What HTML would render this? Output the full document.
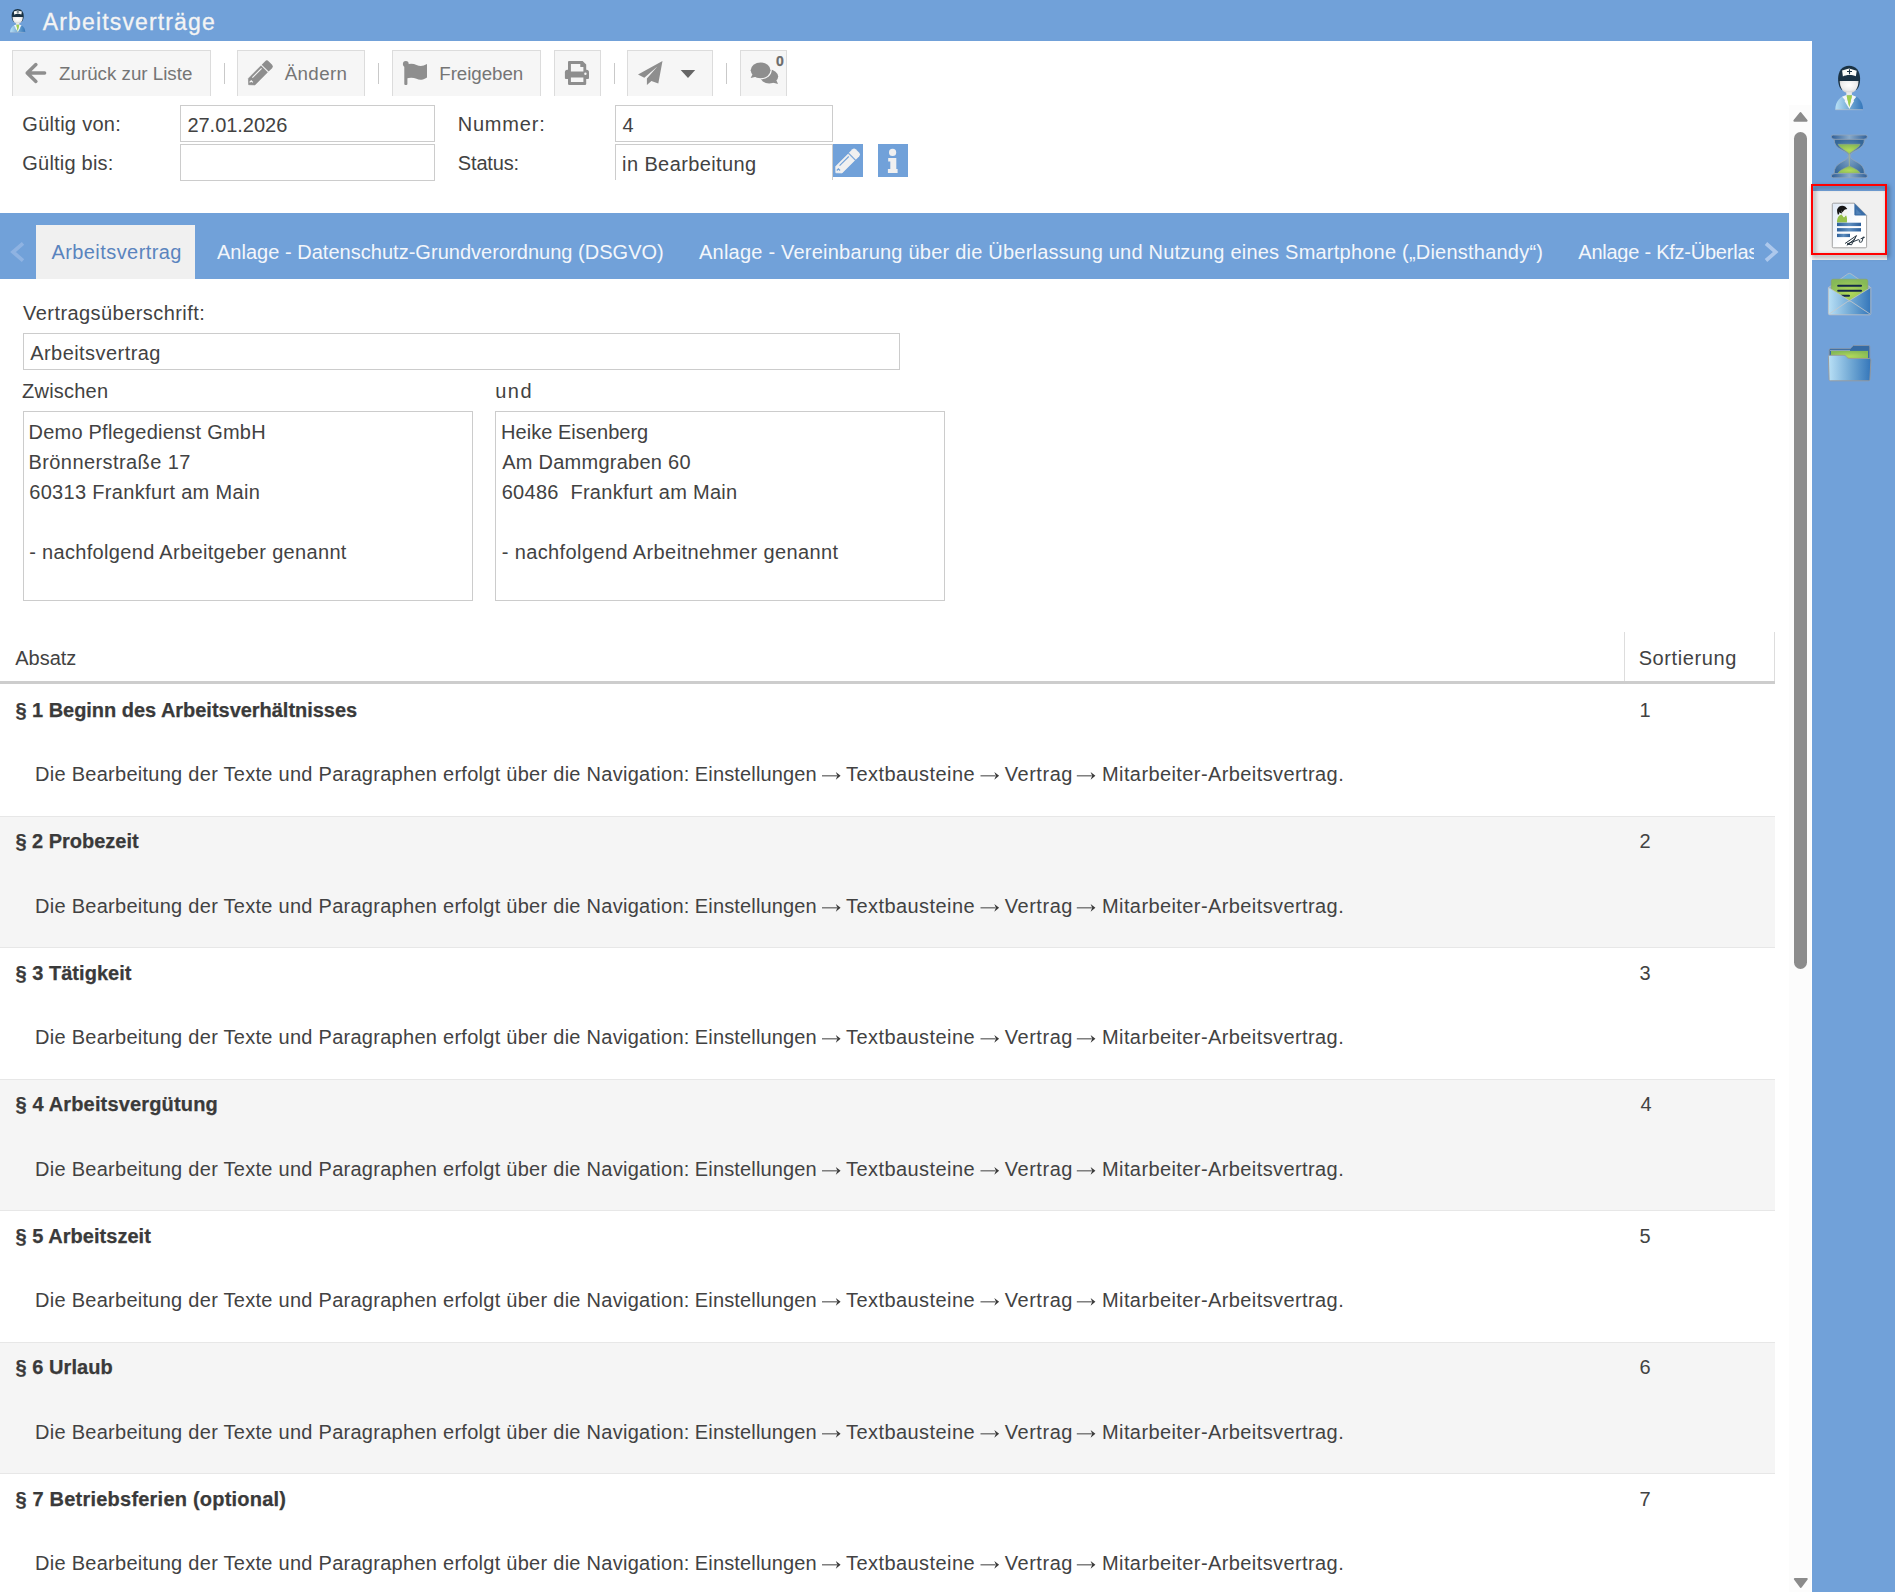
<!DOCTYPE html>
<html lang="de">
<head>
<meta charset="utf-8">
<title>Arbeitsverträge</title>
<style>
*{box-sizing:border-box;margin:0;padding:0}
html,body{width:1895px;height:1592px;overflow:hidden;background:#fff}
body{position:relative;font-family:"Liberation Sans",sans-serif;font-size:20px;color:#424242}
.a{position:absolute}
.t{position:absolute;white-space:pre;line-height:1}
svg{position:absolute;overflow:visible}
.btn{position:absolute;top:50px;height:46px;background:#f6f6f6;border:1px solid #dcdcdc;border-bottom:none}
.sep{position:absolute;top:63px;width:1px;height:21px;background:#c9c9c9}
.inp{position:absolute;border:1px solid #ccc;background:#fff}
.row{position:absolute;left:0;width:1775px}
</style>
</head>
<body>
<div class="a" style="left:0px;top:0px;width:1895px;height:41px;background:#71a1d9"></div>
<div class="a" style="left:1812px;top:0px;width:83px;height:1592px;background:#71a1d9"></div>
<div class="btn" style="left:12px;width:199px"></div>
<div class="btn" style="left:237px;width:128px"></div>
<div class="btn" style="left:392px;width:149px"></div>
<div class="btn" style="left:554px;width:47px"></div>
<div class="btn" style="left:627px;width:86px"></div>
<div class="btn" style="left:740px;width:47px"></div>
<div class="sep" style="left:224px"></div>
<div class="sep" style="left:378px"></div>
<div class="sep" style="left:614px"></div>
<div class="sep" style="left:726px"></div>
<div class="inp" style="left:180px;top:105px;width:255px;height:37px"></div>
<div class="inp" style="left:180px;top:144px;width:255px;height:37px"></div>
<div class="inp" style="left:615px;top:105px;width:218px;height:37px"></div>
<div class="inp" style="left:615px;top:144px;width:218px;height:36px;border-bottom:none"></div>
<div class="a" style="left:833px;top:144px;width:30px;height:33px;background:#71a1d9"></div>
<div class="a" style="left:878px;top:144px;width:30px;height:33px;background:#71a1d9"></div>
<div class="a" style="left:0px;top:213px;width:1789px;height:66px;background:#71a1d9"></div>
<div class="a" style="left:36px;top:225px;width:159px;height:54px;background:#f0f0f0"></div>
<div class="inp" style="left:23px;top:333px;width:877px;height:37px"></div>
<div class="inp" style="left:23px;top:411px;width:450px;height:190px"></div>
<div class="inp" style="left:495px;top:411px;width:450px;height:190px"></div>
<div class="a" style="left:1624px;top:632px;width:1px;height:50px;background:#ddd"></div>
<div class="a" style="left:1774px;top:632px;width:1px;height:50px;background:#ddd"></div>
<div class="row" style="top:817px;height:130px;background:#f5f5f5"></div>
<div class="row" style="top:816px;height:1px;background:#e7e7e7"></div>
<div class="row" style="top:947px;height:1px;background:#e7e7e7"></div>
<div class="row" style="top:1080px;height:130px;background:#f5f5f5"></div>
<div class="row" style="top:1079px;height:1px;background:#e7e7e7"></div>
<div class="row" style="top:1210px;height:1px;background:#e7e7e7"></div>
<div class="row" style="top:1343px;height:130px;background:#f5f5f5"></div>
<div class="row" style="top:1342px;height:1px;background:#e7e7e7"></div>
<div class="row" style="top:1473px;height:1px;background:#e7e7e7"></div>
<div class="a" style="left:0px;top:681px;width:1775px;height:3px;background:#cdcdcd"></div>
<div class="a" style="left:1789px;top:105px;width:22px;height:1487px;background:#fcfcfc"></div>
<div class="a" style="left:1794px;top:132px;width:13px;height:837px;background:#8c8c8c;border-radius:6.5px"></div>
<div class="a" style="left:1812px;top:191px;width:75px;height:69px;background:#f0f0f0"></div>
<div class="t" style="left:42.80px;top:11px;font-size:23px;color:#f4f4f4;letter-spacing:1.143px;-webkit-text-stroke:0.3px #f4f4f4">Arbeitsverträge</div>
<div class="t" style="left:59.00px;top:65px;font-size:18.75px;color:#757575;letter-spacing:0.000px">Zurück zur Liste</div>
<div class="t" style="left:284.70px;top:65px;font-size:18.75px;color:#757575;letter-spacing:0.360px">Ändern</div>
<div class="t" style="left:439.30px;top:65px;font-size:18.75px;color:#757575;letter-spacing:-0.063px">Freigeben</div>
<div class="t" style="left:776.10px;top:54px;font-size:14px;color:#6c6c6c;letter-spacing:0.000px;font-weight:bold;-webkit-text-stroke:0.25px #6c6c6c">0</div>
<div class="t" style="left:22.30px;top:114px;font-size:20px;color:#424242;letter-spacing:0.290px">Gültig von:</div>
<div class="t" style="left:22.30px;top:153px;font-size:20px;color:#424242;letter-spacing:0.210px">Gültig bis:</div>
<div class="t" style="left:457.70px;top:114px;font-size:20px;color:#424242;letter-spacing:0.800px">Nummer:</div>
<div class="t" style="left:457.80px;top:153px;font-size:20px;color:#424242;letter-spacing:-0.150px">Status:</div>
<div class="t" style="left:187.40px;top:115px;font-size:20px;color:#424242;letter-spacing:-0.022px">27.01.2026</div>
<div class="t" style="left:622.40px;top:115px;font-size:20px;color:#424242;letter-spacing:0.000px">4</div>
<div class="t" style="left:622.10px;top:154px;font-size:20px;color:#424242;letter-spacing:0.392px">in Bearbeitung</div>
<div class="t" style="left:51.40px;top:242px;font-size:20px;color:#5a84be;letter-spacing:0.431px">Arbeitsvertrag</div>
<div class="t" style="left:217.00px;top:242px;font-size:20px;color:#f3f6fb;letter-spacing:0.023px">Anlage - Datenschutz-Grundverordnung (DSGVO)</div>
<div class="t" style="left:699.00px;top:242px;font-size:20px;color:#f3f6fb;letter-spacing:0.221px">Anlage - Vereinbarung über die Überlassung und Nutzung eines Smartphone („Diensthandy“)</div>
<div class="t" style="left:1578.30px;top:242px;font-size:20px;color:#f3f6fb;letter-spacing:-0.240px;width:175.9px;overflow:hidden">Anlage - Kfz-Überlassung</div>
<div class="t" style="left:23.10px;top:303px;font-size:20px;color:#424242;letter-spacing:0.432px">Vertragsüberschrift:</div>
<div class="t" style="left:30.20px;top:343px;font-size:20px;color:#424242;letter-spacing:0.446px">Arbeitsvertrag</div>
<div class="t" style="left:22.10px;top:381px;font-size:20px;color:#424242;letter-spacing:0.214px">Zwischen</div>
<div class="t" style="left:495.20px;top:381px;font-size:20px;color:#424242;letter-spacing:1.500px">und</div>
<div class="t" style="left:28.50px;top:422px;font-size:20px;color:#424242;letter-spacing:0.229px">Demo Pflegedienst GmbH</div>
<div class="t" style="left:28.50px;top:452px;font-size:20px;color:#424242;letter-spacing:0.413px">Brönnerstraße 17</div>
<div class="t" style="left:29.20px;top:482px;font-size:20px;color:#424242;letter-spacing:0.327px">60313 Frankfurt am Main</div>
<div class="t" style="left:29.20px;top:542px;font-size:20px;color:#424242;letter-spacing:0.322px">- nachfolgend Arbeitgeber genannt</div>
<div class="t" style="left:501.10px;top:422px;font-size:20px;color:#424242;letter-spacing:0.029px">Heike Eisenberg</div>
<div class="t" style="left:502.20px;top:452px;font-size:20px;color:#424242;letter-spacing:0.253px">Am Dammgraben 60</div>
<div class="t" style="left:501.70px;top:482px;font-size:20px;color:#424242;letter-spacing:0.283px">60486 &nbsp;Frankfurt am Main</div>
<div class="t" style="left:501.70px;top:542px;font-size:20px;color:#424242;letter-spacing:0.391px">- nachfolgend Arbeitnehmer genannt</div>
<div class="t" style="left:15.20px;top:648px;font-size:20px;color:#424242;letter-spacing:0.000px">Absatz</div>
<div class="t" style="left:1638.70px;top:648px;font-size:20px;color:#424242;letter-spacing:0.589px">Sortierung</div>
<div class="t" style="left:15.40px;top:700px;font-size:20px;color:#3a3a3a;letter-spacing:-0.029px;font-weight:bold;-webkit-text-stroke:0.25px #3a3a3a">§ 1 Beginn des Arbeitsverhältnisses</div>
<div class="t" style="left:1639.50px;top:700px;font-size:20px;color:#424242;letter-spacing:0.000px">1</div>
<div class="t" style="left:35.00px;top:764px;font-size:20px;color:#424242;letter-spacing:0.272px">Die Bearbeitung der Texte und Paragraphen erfolgt über die Navigation:</div>
<div class="t" style="left:694.80px;top:764px;font-size:20px;color:#424242;letter-spacing:0.150px">Einstellungen</div>
<div class="t" style="left:846.00px;top:764px;font-size:20px;color:#424242;letter-spacing:0.433px">Textbausteine</div>
<div class="t" style="left:1004.70px;top:764px;font-size:20px;color:#424242;letter-spacing:0.550px">Vertrag</div>
<div class="t" style="left:1102.00px;top:764px;font-size:20px;color:#424242;letter-spacing:0.404px">Mitarbeiter-Arbeitsvertrag.</div>
<div class="t" style="left:15.40px;top:831px;font-size:20px;color:#3a3a3a;letter-spacing:-0.008px;font-weight:bold;-webkit-text-stroke:0.25px #3a3a3a">§ 2 Probezeit</div>
<div class="t" style="left:1639.50px;top:831px;font-size:20px;color:#424242;letter-spacing:0.000px">2</div>
<div class="t" style="left:35.00px;top:896px;font-size:20px;color:#424242;letter-spacing:0.272px">Die Bearbeitung der Texte und Paragraphen erfolgt über die Navigation:</div>
<div class="t" style="left:694.80px;top:896px;font-size:20px;color:#424242;letter-spacing:0.150px">Einstellungen</div>
<div class="t" style="left:846.00px;top:896px;font-size:20px;color:#424242;letter-spacing:0.433px">Textbausteine</div>
<div class="t" style="left:1004.70px;top:896px;font-size:20px;color:#424242;letter-spacing:0.550px">Vertrag</div>
<div class="t" style="left:1102.00px;top:896px;font-size:20px;color:#424242;letter-spacing:0.404px">Mitarbeiter-Arbeitsvertrag.</div>
<div class="t" style="left:15.40px;top:963px;font-size:20px;color:#3a3a3a;letter-spacing:0.042px;font-weight:bold;-webkit-text-stroke:0.25px #3a3a3a">§ 3 Tätigkeit</div>
<div class="t" style="left:1639.50px;top:963px;font-size:20px;color:#424242;letter-spacing:0.000px">3</div>
<div class="t" style="left:35.00px;top:1027px;font-size:20px;color:#424242;letter-spacing:0.272px">Die Bearbeitung der Texte und Paragraphen erfolgt über die Navigation:</div>
<div class="t" style="left:694.80px;top:1027px;font-size:20px;color:#424242;letter-spacing:0.150px">Einstellungen</div>
<div class="t" style="left:846.00px;top:1027px;font-size:20px;color:#424242;letter-spacing:0.433px">Textbausteine</div>
<div class="t" style="left:1004.70px;top:1027px;font-size:20px;color:#424242;letter-spacing:0.550px">Vertrag</div>
<div class="t" style="left:1102.00px;top:1027px;font-size:20px;color:#424242;letter-spacing:0.404px">Mitarbeiter-Arbeitsvertrag.</div>
<div class="t" style="left:15.40px;top:1094px;font-size:20px;color:#3a3a3a;letter-spacing:0.163px;font-weight:bold;-webkit-text-stroke:0.25px #3a3a3a">§ 4 Arbeitsvergütung</div>
<div class="t" style="left:1640.50px;top:1094px;font-size:20px;color:#424242;letter-spacing:0.000px">4</div>
<div class="t" style="left:35.00px;top:1159px;font-size:20px;color:#424242;letter-spacing:0.272px">Die Bearbeitung der Texte und Paragraphen erfolgt über die Navigation:</div>
<div class="t" style="left:694.80px;top:1159px;font-size:20px;color:#424242;letter-spacing:0.150px">Einstellungen</div>
<div class="t" style="left:846.00px;top:1159px;font-size:20px;color:#424242;letter-spacing:0.433px">Textbausteine</div>
<div class="t" style="left:1004.70px;top:1159px;font-size:20px;color:#424242;letter-spacing:0.550px">Vertrag</div>
<div class="t" style="left:1102.00px;top:1159px;font-size:20px;color:#424242;letter-spacing:0.404px">Mitarbeiter-Arbeitsvertrag.</div>
<div class="t" style="left:15.40px;top:1226px;font-size:20px;color:#3a3a3a;letter-spacing:0.043px;font-weight:bold;-webkit-text-stroke:0.25px #3a3a3a">§ 5 Arbeitszeit</div>
<div class="t" style="left:1639.50px;top:1226px;font-size:20px;color:#424242;letter-spacing:0.000px">5</div>
<div class="t" style="left:35.00px;top:1290px;font-size:20px;color:#424242;letter-spacing:0.272px">Die Bearbeitung der Texte und Paragraphen erfolgt über die Navigation:</div>
<div class="t" style="left:694.80px;top:1290px;font-size:20px;color:#424242;letter-spacing:0.150px">Einstellungen</div>
<div class="t" style="left:846.00px;top:1290px;font-size:20px;color:#424242;letter-spacing:0.433px">Textbausteine</div>
<div class="t" style="left:1004.70px;top:1290px;font-size:20px;color:#424242;letter-spacing:0.550px">Vertrag</div>
<div class="t" style="left:1102.00px;top:1290px;font-size:20px;color:#424242;letter-spacing:0.404px">Mitarbeiter-Arbeitsvertrag.</div>
<div class="t" style="left:15.40px;top:1357px;font-size:20px;color:#3a3a3a;letter-spacing:0.067px;font-weight:bold;-webkit-text-stroke:0.25px #3a3a3a">§ 6 Urlaub</div>
<div class="t" style="left:1639.50px;top:1357px;font-size:20px;color:#424242;letter-spacing:0.000px">6</div>
<div class="t" style="left:35.00px;top:1422px;font-size:20px;color:#424242;letter-spacing:0.272px">Die Bearbeitung der Texte und Paragraphen erfolgt über die Navigation:</div>
<div class="t" style="left:694.80px;top:1422px;font-size:20px;color:#424242;letter-spacing:0.150px">Einstellungen</div>
<div class="t" style="left:846.00px;top:1422px;font-size:20px;color:#424242;letter-spacing:0.433px">Textbausteine</div>
<div class="t" style="left:1004.70px;top:1422px;font-size:20px;color:#424242;letter-spacing:0.550px">Vertrag</div>
<div class="t" style="left:1102.00px;top:1422px;font-size:20px;color:#424242;letter-spacing:0.404px">Mitarbeiter-Arbeitsvertrag.</div>
<div class="t" style="left:15.40px;top:1489px;font-size:20px;color:#3a3a3a;letter-spacing:0.218px;font-weight:bold;-webkit-text-stroke:0.25px #3a3a3a">§ 7 Betriebsferien (optional)</div>
<div class="t" style="left:1639.50px;top:1489px;font-size:20px;color:#424242;letter-spacing:0.000px">7</div>
<div class="t" style="left:35.00px;top:1553px;font-size:20px;color:#424242;letter-spacing:0.272px">Die Bearbeitung der Texte und Paragraphen erfolgt über die Navigation:</div>
<div class="t" style="left:694.80px;top:1553px;font-size:20px;color:#424242;letter-spacing:0.150px">Einstellungen</div>
<div class="t" style="left:846.00px;top:1553px;font-size:20px;color:#424242;letter-spacing:0.433px">Textbausteine</div>
<div class="t" style="left:1004.70px;top:1553px;font-size:20px;color:#424242;letter-spacing:0.550px">Vertrag</div>
<div class="t" style="left:1102.00px;top:1553px;font-size:20px;color:#424242;letter-spacing:0.404px">Mitarbeiter-Arbeitsvertrag.</div>
<svg width="1895" height="1592" viewBox="0 0 1895 1592" style="left:0;top:0"><path d="M44.6,73 H27.2 M35.9,64.6 L27.2,73 L35.9,81.4" fill="none" stroke="#8e8e8e" stroke-width="3.5" stroke-linecap="round" stroke-linejoin="round"/>
<g transform="translate(248.4,84.9) rotate(-45)">
<path d="M0.3,0 L4.6,-4.6 L22.4,-4.6 L22.4,4.6 L4.6,4.6 Z" fill="#8e8e8e" stroke="#8e8e8e" stroke-width="0.6" stroke-linejoin="round"/>
<path d="M23.7,-4.9 H28.6 Q31,-4.9 31,-2.5 V2.5 Q31,4.9 28.6,4.9 H23.7 Z" fill="#8e8e8e"/>
<rect x="8" y="-2.9" width="13" height="1.1" fill="#f6f6f6"/>
<path d="M2.6,-0.9 L4.9,-0.9 L4.9,1.4" fill="none" stroke="#f6f6f6" stroke-width="1.2"/>
</g>
<circle cx="405.8" cy="63.9" r="2.9" fill="#8e8e8e"/><rect x="404.3" y="64" width="3.1" height="21" rx="1" fill="#8e8e8e"/>
<path d="M406,64.8 C410,63.3 413.5,63.6 416.5,65 C420,66.7 423,66.4 427,64.1 L427,77.4 C423,79.9 420,80.3 416.5,78.8 C413.5,77.5 410.5,77.3 406,78.4 Z" fill="#8e8e8e"/>
<path d="M569,61 H582.6 L586.2,64.6 V72 H568 V62 Q568,61 569,61 Z" fill="#8e8e8e"/>
<path d="M567.4,69.8 H586.5 Q589,69.8 589,72.3 V78 Q589,79 588,79 H565.9 Q564.9,79 564.9,78 V72.3 Q564.9,69.8 567.4,69.8 Z" fill="#8e8e8e"/>
<rect x="568" y="74.8" width="18.2" height="10.2" rx="1.2" fill="#8e8e8e"/>
<path d="M570.9,63.9 H580.3 V67 H583.4 V71.6 H570.9 Z" fill="#f6f6f6"/>
<rect x="570.9" y="77.5" width="12.5" height="4.5" fill="#f6f6f6"/>
<circle cx="585.4" cy="73.7" r="1.2" fill="#f6f6f6"/>
<path d="M662.5,60.9 L638,74.6 L644.3,77.8 L657.4,66.4 L646.9,78.4 L646.9,85.1 L651.4,80.9 L658.3,83.6 Z" fill="#8e8e8e"/>
<path d="M680.7,70 H695.2 L688,78 Z" fill="#666"/>
<path d="M776.5,80.5 L778,83.9 L772.5,82.6 Z" fill="#8e8e8e"/>
<ellipse cx="769.2" cy="76.6" rx="9" ry="7" fill="#8e8e8e"/>
<ellipse cx="760.6" cy="70.3" rx="11.1" ry="9" fill="#f6f6f6"/>
<path d="M752.8,74 L750.6,78 L757,76.6 Z" fill="#8e8e8e"/>
<ellipse cx="760.6" cy="70.3" rx="9.9" ry="7.9" fill="#8e8e8e"/>
<g transform="translate(835.6,173) rotate(-45)">
<path d="M0.3,0 L4.6,-4.6 L22.4,-4.6 L22.4,4.6 L4.6,4.6 Z" fill="#f0f0f0" stroke="#f0f0f0" stroke-width="0.6" stroke-linejoin="round"/>
<path d="M23.7,-4.9 H28.6 Q31,-4.9 31,-2.5 V2.5 Q31,4.9 28.6,4.9 H23.7 Z" fill="#f0f0f0"/>
<rect x="8" y="-2.9" width="13" height="1.1" fill="#71a1d9"/>
<path d="M2.6,-0.9 L4.9,-0.9 L4.9,1.4" fill="none" stroke="#71a1d9" stroke-width="1.2"/>
</g>
<circle cx="892.6" cy="152.4" r="3.6" fill="#f0f0f0"/><path d="M888.2,158 H896.3 V168.9 H897.6 V173 H887.9 V168.9 H890.3 V161.6 H888.2 Z" fill="#f0f0f0"/>
<path d="M23,243.3 L13,252 L23,260.7" fill="none" stroke="#8fb3e2" stroke-width="3.7"/>
<path d="M1766,243.5 L1775.7,252 L1766,260.5" fill="none" stroke="#adc8ec" stroke-width="3.7"/>
<path d="M1800.5,113 L1806.6,120.7 H1794.4 Z" fill="#8b8b8b" stroke="#8b8b8b" stroke-width="2" stroke-linejoin="round"/>
<path d="M1794.8,1579 H1806.8 L1800.8,1587 Z" fill="#8b8b8b" stroke="#8b8b8b" stroke-width="2" stroke-linejoin="round"/>
<path d="M822,775.8 h15" stroke="#6a6a6a" stroke-width="1.3" fill="none"/><path d="M840.6,775.8 l-4.8,-3.9 l1.6,3.9 l-1.6,3.9 Z" fill="#3a3a3a"/>
<path d="M980.5,775.8 h15" stroke="#6a6a6a" stroke-width="1.3" fill="none"/><path d="M999.1,775.8 l-4.8,-3.9 l1.6,3.9 l-1.6,3.9 Z" fill="#3a3a3a"/>
<path d="M1076.8,775.8 h15" stroke="#6a6a6a" stroke-width="1.3" fill="none"/><path d="M1095.3999999999999,775.8 l-4.8,-3.9 l1.6,3.9 l-1.6,3.9 Z" fill="#3a3a3a"/>
<path d="M822,907.8 h15" stroke="#6a6a6a" stroke-width="1.3" fill="none"/><path d="M840.6,907.8 l-4.8,-3.9 l1.6,3.9 l-1.6,3.9 Z" fill="#3a3a3a"/>
<path d="M980.5,907.8 h15" stroke="#6a6a6a" stroke-width="1.3" fill="none"/><path d="M999.1,907.8 l-4.8,-3.9 l1.6,3.9 l-1.6,3.9 Z" fill="#3a3a3a"/>
<path d="M1076.8,907.8 h15" stroke="#6a6a6a" stroke-width="1.3" fill="none"/><path d="M1095.3999999999999,907.8 l-4.8,-3.9 l1.6,3.9 l-1.6,3.9 Z" fill="#3a3a3a"/>
<path d="M822,1038.8 h15" stroke="#6a6a6a" stroke-width="1.3" fill="none"/><path d="M840.6,1038.8 l-4.8,-3.9 l1.6,3.9 l-1.6,3.9 Z" fill="#3a3a3a"/>
<path d="M980.5,1038.8 h15" stroke="#6a6a6a" stroke-width="1.3" fill="none"/><path d="M999.1,1038.8 l-4.8,-3.9 l1.6,3.9 l-1.6,3.9 Z" fill="#3a3a3a"/>
<path d="M1076.8,1038.8 h15" stroke="#6a6a6a" stroke-width="1.3" fill="none"/><path d="M1095.3999999999999,1038.8 l-4.8,-3.9 l1.6,3.9 l-1.6,3.9 Z" fill="#3a3a3a"/>
<path d="M822,1170.8 h15" stroke="#6a6a6a" stroke-width="1.3" fill="none"/><path d="M840.6,1170.8 l-4.8,-3.9 l1.6,3.9 l-1.6,3.9 Z" fill="#3a3a3a"/>
<path d="M980.5,1170.8 h15" stroke="#6a6a6a" stroke-width="1.3" fill="none"/><path d="M999.1,1170.8 l-4.8,-3.9 l1.6,3.9 l-1.6,3.9 Z" fill="#3a3a3a"/>
<path d="M1076.8,1170.8 h15" stroke="#6a6a6a" stroke-width="1.3" fill="none"/><path d="M1095.3999999999999,1170.8 l-4.8,-3.9 l1.6,3.9 l-1.6,3.9 Z" fill="#3a3a3a"/>
<path d="M822,1301.8 h15" stroke="#6a6a6a" stroke-width="1.3" fill="none"/><path d="M840.6,1301.8 l-4.8,-3.9 l1.6,3.9 l-1.6,3.9 Z" fill="#3a3a3a"/>
<path d="M980.5,1301.8 h15" stroke="#6a6a6a" stroke-width="1.3" fill="none"/><path d="M999.1,1301.8 l-4.8,-3.9 l1.6,3.9 l-1.6,3.9 Z" fill="#3a3a3a"/>
<path d="M1076.8,1301.8 h15" stroke="#6a6a6a" stroke-width="1.3" fill="none"/><path d="M1095.3999999999999,1301.8 l-4.8,-3.9 l1.6,3.9 l-1.6,3.9 Z" fill="#3a3a3a"/>
<path d="M822,1433.8 h15" stroke="#6a6a6a" stroke-width="1.3" fill="none"/><path d="M840.6,1433.8 l-4.8,-3.9 l1.6,3.9 l-1.6,3.9 Z" fill="#3a3a3a"/>
<path d="M980.5,1433.8 h15" stroke="#6a6a6a" stroke-width="1.3" fill="none"/><path d="M999.1,1433.8 l-4.8,-3.9 l1.6,3.9 l-1.6,3.9 Z" fill="#3a3a3a"/>
<path d="M1076.8,1433.8 h15" stroke="#6a6a6a" stroke-width="1.3" fill="none"/><path d="M1095.3999999999999,1433.8 l-4.8,-3.9 l1.6,3.9 l-1.6,3.9 Z" fill="#3a3a3a"/>
<path d="M822,1564.8 h15" stroke="#6a6a6a" stroke-width="1.3" fill="none"/><path d="M840.6,1564.8 l-4.8,-3.9 l1.6,3.9 l-1.6,3.9 Z" fill="#3a3a3a"/>
<path d="M980.5,1564.8 h15" stroke="#6a6a6a" stroke-width="1.3" fill="none"/><path d="M999.1,1564.8 l-4.8,-3.9 l1.6,3.9 l-1.6,3.9 Z" fill="#3a3a3a"/>
<path d="M1076.8,1564.8 h15" stroke="#6a6a6a" stroke-width="1.3" fill="none"/><path d="M1095.3999999999999,1564.8 l-4.8,-3.9 l1.6,3.9 l-1.6,3.9 Z" fill="#3a3a3a"/></svg>
<svg width="1895" height="1592" viewBox="0 0 1895 1592" style="left:0;top:0"><defs>
<linearGradient id="gb" x1="0" x2="1" y1="0" y2="0"><stop offset="0" stop-color="#b9e0f6"/><stop offset="0.55" stop-color="#6ea6d3"/><stop offset="1" stop-color="#3476ba"/></linearGradient>
<linearGradient id="gp" x1="0" x2="1" y1="0" y2="0"><stop offset="0" stop-color="#2c5c96"/><stop offset="0.5" stop-color="#88aacb"/><stop offset="1" stop-color="#2f5f99"/></linearGradient>
<radialGradient id="gh" cx="0.5" cy="0.55" r="0.6"><stop offset="0" stop-color="#7fa3c6"/><stop offset="1" stop-color="#356799"/></radialGradient>
<radialGradient id="gf" cx="0.5" cy="0.35" r="0.7"><stop offset="0" stop-color="#ffffff"/><stop offset="0.6" stop-color="#ececec"/><stop offset="1" stop-color="#bdbdbd"/></radialGradient>
<radialGradient id="gg" cx="0.5" cy="0.6" r="0.6"><stop offset="0" stop-color="#b2d95a"/><stop offset="1" stop-color="#86b957"/></radialGradient>
<linearGradient id="gd" x1="0" x2="1" y1="0" y2="1"><stop offset="0" stop-color="#dfe9f6"/><stop offset="0.6" stop-color="#ffffff"/><stop offset="1" stop-color="#ffffff"/></linearGradient>
<linearGradient id="gl" x1="0" x2="1" y1="0" y2="0"><stop offset="0" stop-color="#2c5f9a"/><stop offset="0.5" stop-color="#5f8fc0"/><stop offset="1" stop-color="#2c5f9a"/></linearGradient>

</defs>
<g transform="translate(1835.1,65.7)">
<path d="M14,0 C20.8,0 25,5.2 25,13 C25,19 23.2,23 21,24.4 L7,24.4 C4.8,23 3,19 3,13 C3,5.2 7.2,0 14,0 Z" fill="#1a3244"/>
<path d="M4.6,15 H23.4 C23.4,22 20,27.5 14,27.5 C8,27.5 4.6,22 4.6,15 Z" fill="url(#gf)"/>
<path d="M3.6,15.3 C4.5,11.5 8,9.2 14,9.2 C20,9.2 23.5,11.5 24.4,15.3 Z" fill="#1a3244"/>
<path d="M7,4.8 L14,2.9 L21.6,5 L20.8,10.6 C17,8.8 11,8.8 7.8,10.8 Z" fill="#fbfbf8"/>
<path d="M14.4,3.6 V8.6 M11.9,5.8 H16.9" stroke="#1a3244" stroke-width="1.1" fill="none"/>
<rect x="11.2" y="26.5" width="5.6" height="5" fill="#e9e9e9"/>
<path d="M0.2,44 C0.2,35.5 6,30 11,29.6 L17.2,29.6 C22.5,30 27.9,35.5 27.9,44 Z" fill="url(#gb)"/>
<path d="M11,29.6 L17.2,29.6 L14.2,43 Z" fill="#a4d057"/>
<path d="M7,31 L11.4,29.2 L14.2,41 L17,29.2 L21.2,31 L18.4,34.6 L19,35.4 L14.3,43.4 L9.4,35.4 L10,34.6 Z" fill="#f4f6f8"/>
<path d="M11.6,30.5 L16.8,30.5 L14.2,41.5 Z" fill="#9fcd52"/>
<path d="M0.4,44 H27.8" stroke="#b9c2cc" stroke-width="0.7"/>
</g>
<g transform="translate(10,8.9) scale(0.548,0.532)">
<path d="M14,0 C20.8,0 25,5.2 25,13 C25,19 23.2,23 21,24.4 L7,24.4 C4.8,23 3,19 3,13 C3,5.2 7.2,0 14,0 Z" fill="#1a3244"/>
<path d="M4.6,15 H23.4 C23.4,22 20,27.5 14,27.5 C8,27.5 4.6,22 4.6,15 Z" fill="url(#gf)"/>
<path d="M3.6,15.3 C4.5,11.5 8,9.2 14,9.2 C20,9.2 23.5,11.5 24.4,15.3 Z" fill="#1a3244"/>
<path d="M7,4.8 L14,2.9 L21.6,5 L20.8,10.6 C17,8.8 11,8.8 7.8,10.8 Z" fill="#fbfbf8"/>
<path d="M14.4,3.6 V8.6 M11.9,5.8 H16.9" stroke="#1a3244" stroke-width="1.1" fill="none"/>
<rect x="11.2" y="26.5" width="5.6" height="5" fill="#e9e9e9"/>
<path d="M0.2,44 C0.2,35.5 6,30 11,29.6 L17.2,29.6 C22.5,30 27.9,35.5 27.9,44 Z" fill="url(#gb)"/>
<path d="M11,29.6 L17.2,29.6 L14.2,43 Z" fill="#a4d057"/>
<path d="M7,31 L11.4,29.2 L14.2,41 L17,29.2 L21.2,31 L18.4,34.6 L19,35.4 L14.3,43.4 L9.4,35.4 L10,34.6 Z" fill="#f4f6f8"/>
<path d="M11.6,30.5 L16.8,30.5 L14.2,41.5 Z" fill="#9fcd52"/>
<path d="M0.4,44 H27.8" stroke="#b9c2cc" stroke-width="0.7"/>
</g>
<g>
<path d="M1834.2,139 H1864.4 C1864.8,150.5 1850.8,150 1850.1,156 C1850.8,162 1864.8,161.5 1864.4,173.6 H1834.2 C1833.8,161.5 1847.8,162 1848.5,156 C1847.8,150 1833.8,150.5 1834.2,139 Z" fill="url(#gh)" stroke="#9aa6b4" stroke-width="0.7"/>
<path d="M1838,144.3 H1860.2 C1858,149 1851,151 1849.3,154.3 C1847.6,151 1840.5,149 1838,144.3 Z" fill="url(#gg)" stroke="#9aa88a" stroke-width="0.5"/>
<path d="M1849.3,166 C1853,168 1859,170 1860.2,173.3 H1838 C1839.5,170 1845.5,168 1849.3,166 Z" fill="url(#gg)" stroke="#9aa88a" stroke-width="0.5"/>
<path d="M1849.3,154 V166" stroke="#a8b58c" stroke-width="0.9"/>
<path d="M1833.2,135.1 H1865.4 Q1867.6,135.1 1867.3,136.9 Q1866.8,139.3 1863.6,139.3 H1835 Q1831.8,139.3 1831.3,136.9 Q1831,135.1 1833.2,135.1 Z" fill="url(#gp)" stroke="#9aa6b4" stroke-width="0.7"/>
<path d="M1833.2,177.8 H1865.4 Q1867.6,177.8 1867.3,176 Q1866.8,173.6 1863.6,173.6 H1835 Q1831.8,173.6 1831.3,176 Q1831,177.8 1833.2,177.8 Z" fill="url(#gp)" stroke="#9aa6b4" stroke-width="0.7"/>
</g>
<g>
<path d="M1833.5,203.2 H1854.4 L1866.6,215.4 V246.6 Q1866.6,247.8 1865.4,247.8 H1833.5 Q1832.3,247.8 1832.3,246.6 V204.4 Q1832.3,203.2 1833.5,203.2 Z" fill="url(#gd)" stroke="#8e8e8e" stroke-width="0.8"/>
<path d="M1854.4,203.2 L1866.6,215.4 H1855.6 Q1854.4,215.4 1854.4,214.2 Z" fill="#3a6ea8"/>
<path d="M1856.2,209 L1861.6,214.2 H1856.2 Z" fill="#4f82b8"/>
<ellipse cx="1842.2" cy="209.6" rx="4.6" ry="3.9" fill="#151515"/>
<path d="M1838.3,208 C1836.6,209 1836.8,212 1838,215 L1839.3,213.5 C1838.6,211.5 1838.8,210 1839.6,208.8 Z" fill="#151515"/>
<ellipse cx="1844.6" cy="211.6" rx="2.9" ry="3.3" fill="#f4f4f4"/>
<path d="M1841,209.5 C1843,207.5 1846,207.3 1847.4,209 C1845.5,209 1843.5,210 1842.6,212.5 Z" fill="#151515"/>
<path d="M1837,222.6 C1837,217.5 1839,215 1842,214.6 L1844,217.2 L1846,215.3 C1847.2,217 1847.2,220 1846.9,222.6 Z" fill="#96c14b"/>
<path d="M1841.6,214.4 L1844,217.6 L1846.2,214.6 L1845.2,213.8 Z" fill="#f0f0f0"/>
<rect x="1837" y="222.7" width="24" height="3.4" fill="url(#gl)"/>
<rect x="1837" y="228.1" width="24" height="3.4" fill="url(#gl)"/>
<rect x="1837" y="233.8" width="13" height="3.3" fill="url(#gl)"/>
<path d="M1845,243.5 L1856.5,235.6 L1851.5,244.8 L1847,244 L1858,239.8 C1859.5,239.4 1860,240.4 1859.4,241.5 C1859,242.5 1860.6,242.6 1862,241.6 L1863.4,236.6 M1860.6,238.8 L1864.8,237.2 M1846.8,245.4 L1855.2,238.6" fill="none" stroke="#10202e" stroke-width="0.9"/>
</g>
<g>
<path d="M1829.2,287 L1847.8,273.9 Q1849.4,272.9 1851,273.9 L1870,287 Z" fill="#6fb0de" stroke="#c4c4c4" stroke-width="0.7"/>
<path d="M1833,279.2 H1866 Q1867.8,279.2 1867.8,281 V302 H1831.3 V281 Q1831.3,279.2 1833,279.2 Z" fill="url(#gg)" stroke="#8fa15f" stroke-width="0.6"/>
<path d="M1838.2,285.8 H1861 M1838.2,290.8 H1861 M1841.4,295.8 H1849" stroke="#14284a" stroke-width="2.1" stroke-linecap="round"/>
<path d="M1828.4,287.4 L1849.4,300.6 L1870.8,287.4 V313.4 Q1870.8,314.8 1869.4,314.8 H1829.8 Q1828.4,314.8 1828.4,313.4 Z" fill="url(#gb)" stroke="#c4c4c4" stroke-width="0.8"/>
<path d="M1829.2,314 L1847.8,301.4 Q1849.4,300.4 1851,301.4 L1870,314" fill="none" stroke="#c9c9c9" stroke-width="0.8"/>
</g>
<g>
<path d="M1830.6,348.7 H1850.2 L1853.4,345.5 H1868.4 Q1869.8,345.5 1869.8,346.9 V372 H1829.2 V350.1 Q1829.2,348.7 1830.6,348.7 Z" fill="#356aa3" stroke="#8b96a3" stroke-width="0.8"/>
<path d="M1829.8,350 H1850 L1850,351 H1830.2 Z" fill="#8ba3bf"/>
<rect x="1831" y="350.9" width="37" height="9" fill="url(#gg)"/>
<path d="M1829.8,355.3 H1844 Q1845.4,355.3 1846.2,356.4 L1847,357.4 Q1847.8,358.5 1849.2,358.5 H1869.5 Q1870.9,358.5 1870.9,359.9 L1869.9,379.4 Q1869.8,380.8 1868.4,380.8 H1830.6 Q1829.2,380.8 1829.1,379.4 L1828.4,356.7 Q1828.4,355.3 1829.8,355.3 Z" fill="url(#gb)" stroke="#9a9a9a" stroke-width="0.9"/>
</g></svg>
<div class="a" style="left:1811px;top:184px;width:76px;height:71px;border:2px solid #f00;filter:drop-shadow(2px 2px 2px rgba(0,0,0,.45))"></div>
</body>
</html>
